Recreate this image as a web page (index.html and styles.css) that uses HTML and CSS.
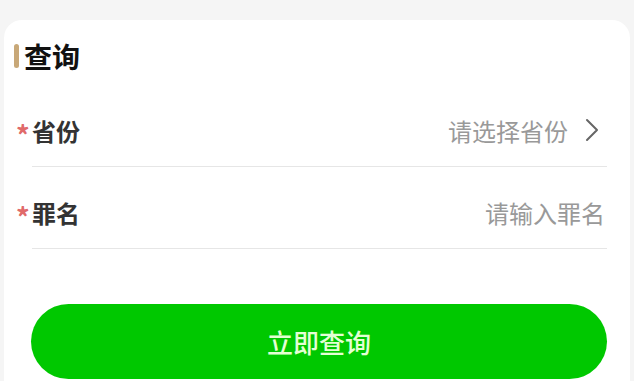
FILE: index.html
```html
<!DOCTYPE html>
<html lang="zh">
  <head>
    <meta charset="UTF-8" />
    <meta name="viewport" content="width=device-width, initial-scale=1.0" />
    <title>查询</title>
    <link rel="stylesheet" href="styles.css">
  </head>
  <body>
    <div class="card">
      <div class="title">
        <span class="title-bar"></span>
        <h2>查询</h2>
      </div>

      <form class="form" onsubmit="return false;">
        <div class="form-item">
          <span class="star">*</span>
          <label>省份</label>
          <div class="value">
            <span class="placeholder">请选择省份</span>
            <svg class="arrow" width="14" height="24" viewBox="0 0 14 24">
              <path d="M2 2 L12 12 L2 22" fill="none" stroke="#666" stroke-width="2" stroke-linecap="round" stroke-linejoin="round" />
            </svg>
          </div>
        </div>

        <div class="form-item">
          <span class="star">*</span>
          <label>罪名</label>
          <input type="text" class="input" placeholder="请输入罪名" />
        </div>

        <button type="submit" class="submit">立即查询</button>
      </form>
    </div>
  </body>
</html>
```

FILE: styles.css
```css
* {
  box-sizing: border-box;
  margin: 0;
  padding: 0;
}

body {
  font-family: "Noto Sans CJK SC", "Noto Sans", sans-serif;
  background-color: #f5f5f5;
  color: #333;
  overflow: hidden;
}

.card {
  margin: 20px 4px 0;
  background-color: #fff;
  border-radius: 18px 18px 0 0;
  min-height: calc(100vh - 20px);
  padding-top: 21px;
}

.title {
  display: flex;
  align-items: center;
  padding-left: 10px;
  height: 30px;
}

.title-bar {
  width: 5px;
  height: 24px;
  border-radius: 3px;
  background-color: #c8a878;
  margin-right: 5px;
}

.title h2 {
  font-size: 28px;
  font-weight: bold;
  color: #111;
  line-height: 30px;
}

.form {
  padding: 0 23px 0 28px;
  margin-top: 14px;
}

.form-item {
  display: flex;
  align-items: center;
  height: 82px;
  padding-top: 9px;
  border-bottom: 1px solid #e6e6e6;
}

.star {
  width: 16px;
  margin-left: -16px;
  padding-left: 0;
  color: #e06a6a;
  font-size: 27px;
  font-weight: bold;
  line-height: 24px;
  margin-top: 10px;
}

.form-item label {
  font-size: 24px;
  font-weight: bold;
  color: #333;
}

.value {
  flex: 1;
  display: flex;
  justify-content: flex-end;
  align-items: center;
  padding-right: 8px;
}

.placeholder {
  font-size: 24px;
  color: #999;
}

.arrow {
  margin-left: 17px;
}

.input {
  flex: 1;
  min-width: 0;
  border: none;
  outline: none;
  text-align: right;
  font-family: inherit;
  font-size: 24px;
  color: #333;
  padding-right: 2px;
  background: transparent;
}

.input::placeholder {
  color: #999;
}

.submit {
  display: block;
  width: 576px;
  height: 75px;
  margin: 55px 0 0 -1px;
  border: none;
  border-radius: 38px;
  background-color: #00c800;
  color: #e4ffd4;
  font-family: inherit;
  font-size: 26px;
  font-weight: 500;
  cursor: pointer;
}
```
